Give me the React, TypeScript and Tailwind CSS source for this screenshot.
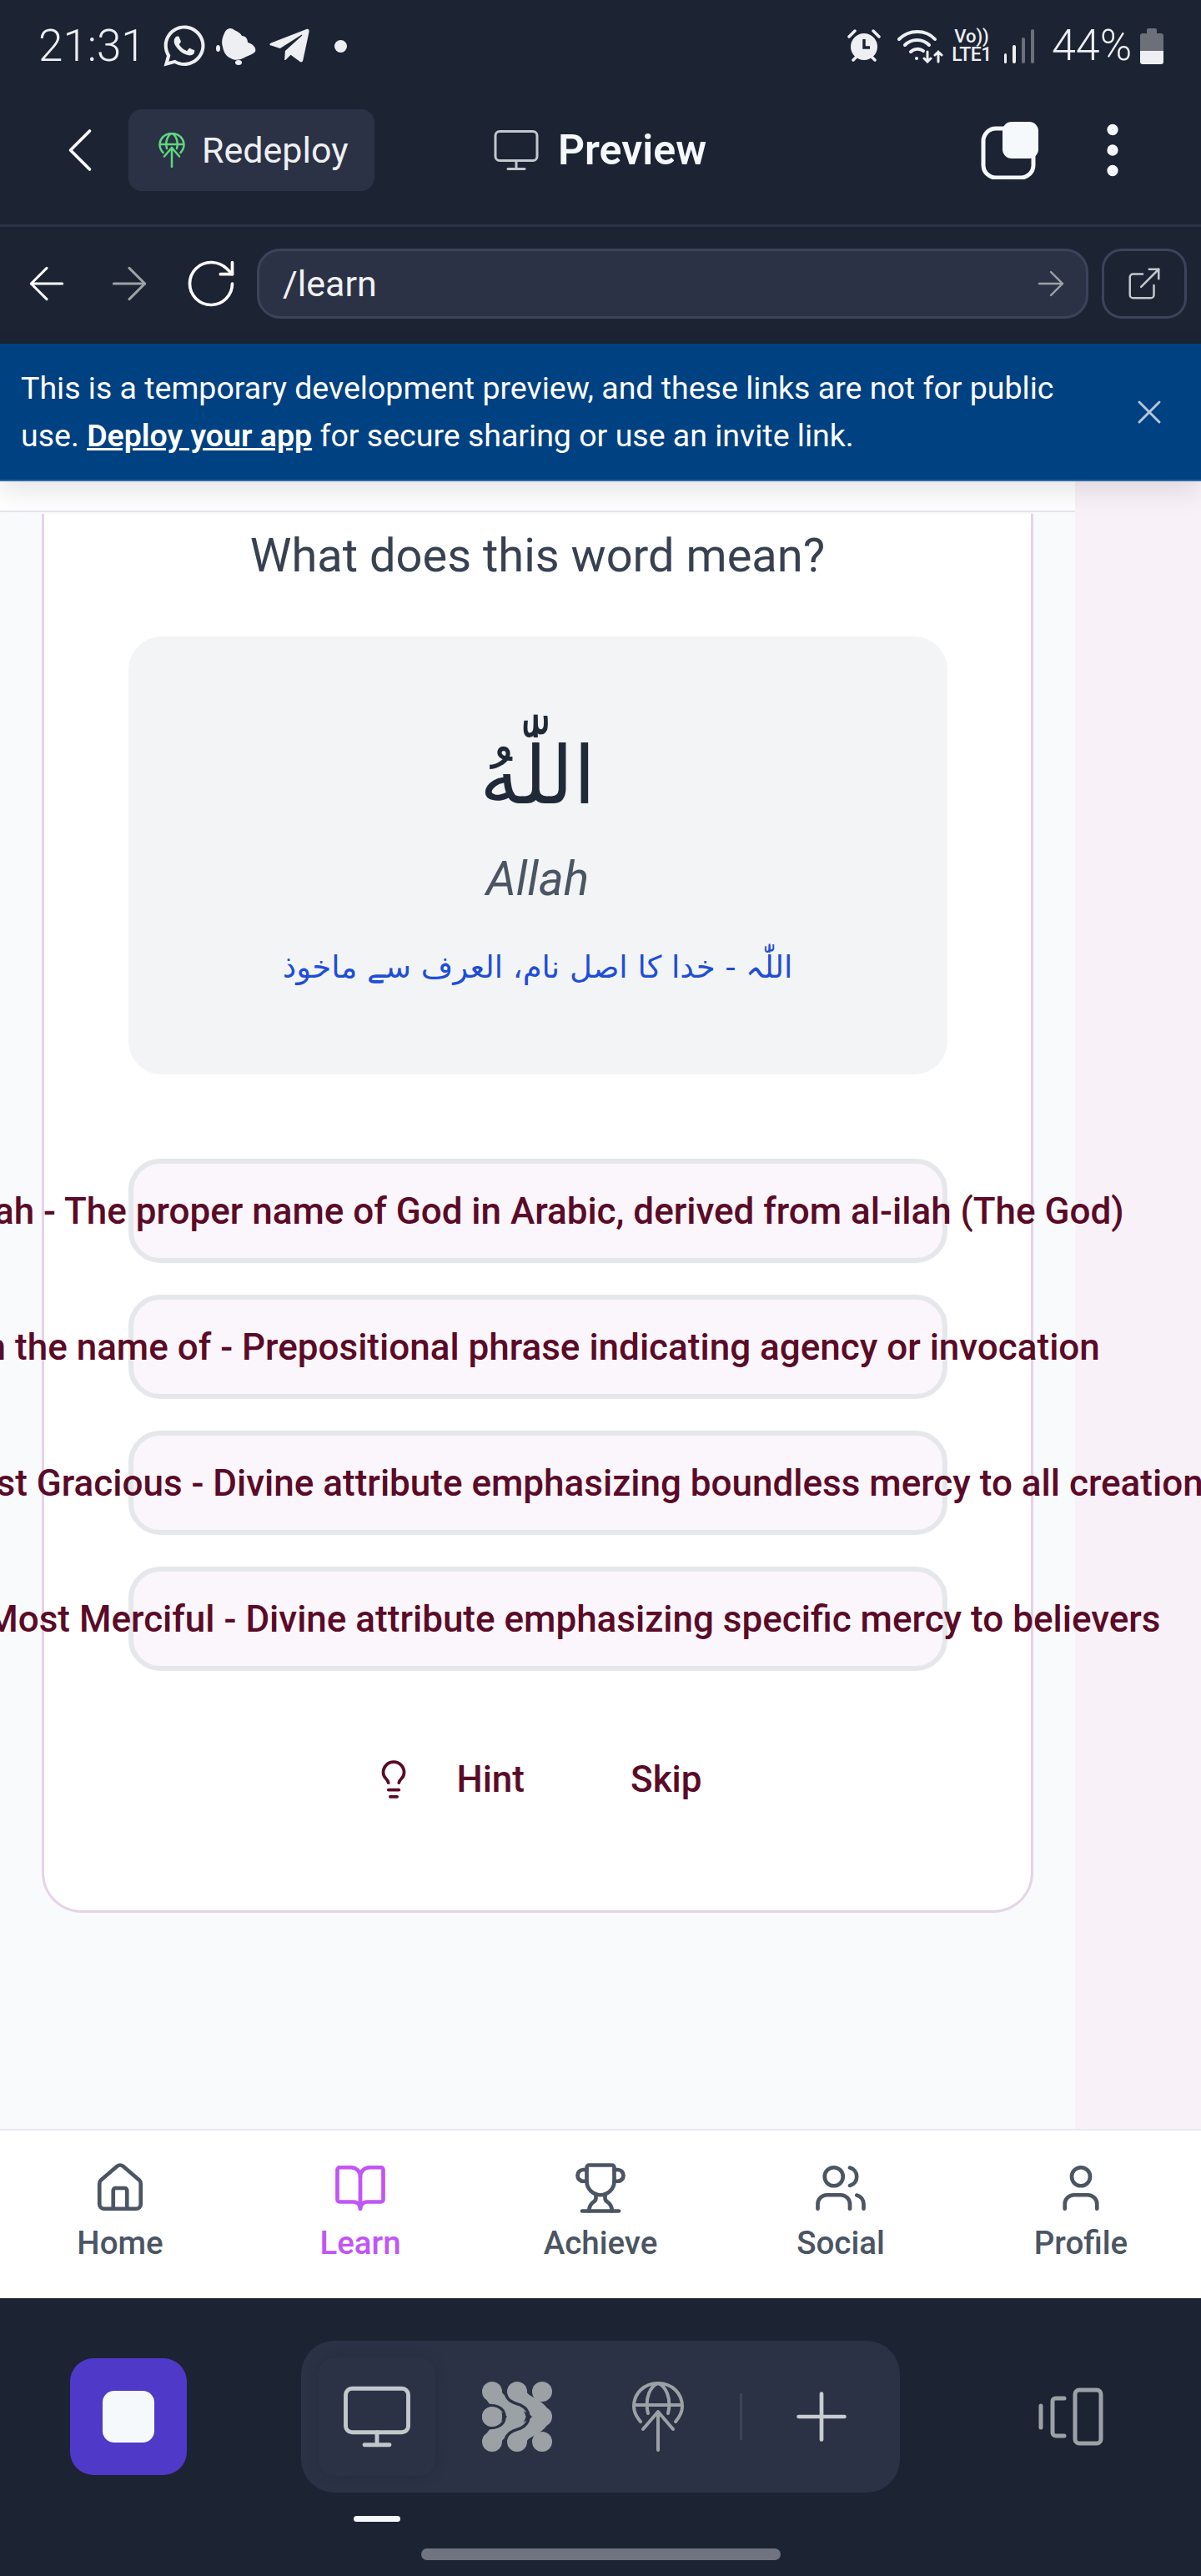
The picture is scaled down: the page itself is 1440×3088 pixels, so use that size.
import React from "react";
import { FaWhatsapp, FaTelegramPlane } from "react-icons/fa";
import { ChevronLeft, Monitor, MoreVertical, ArrowLeft, ArrowRight, RotateCw, ExternalLink, X, Lightbulb, House, BookOpen, Trophy, Users, User, Plus } from "lucide-react";

function DeployGlobe({ className, strokeWidth = 4 }: { className?: string; strokeWidth?: number }) {
  return (
    <svg viewBox="0 0 62 84" fill="none" stroke="currentColor" strokeWidth={strokeWidth} strokeLinecap="round" strokeLinejoin="round" className={className}>
      <path d="M10 48C5 42 2 36 2 30C2 14 14 2 31 2C48 2 60 14 60 30C60 36 57 42 52 48" />
      <path d="M19 38C17 30 17 22 20 14C23 7 27 3 31 2C35 3 39 7 42 14C45 22 45 30 43 38" />
      <path d="M4 28H58" />
      <path d="M31 82V36M13 57L31 36L49 57" />
    </svg>
  );
}

function AgentIcon({ className }: { className?: string }) {
  return (
    <svg viewBox="0 0 84 84" className={className}>
      <g fill="#9ca1a5">
        <circle cx="12" cy="12" r="12" /><circle cx="42" cy="12" r="12" /><circle cx="72" cy="12" r="12" />
        <circle cx="12" cy="42" r="12" /><circle cx="72" cy="42" r="12" />
        <circle cx="12" cy="72" r="12" /><circle cx="42" cy="72" r="12" /><circle cx="72" cy="72" r="12" />
      </g>
      <g fill="none" stroke="#9ca1a5" strokeWidth="20" strokeLinecap="round">
        <path d="M12 12C18 30 36 26 42 42C36 58 18 54 12 72" />
        <path d="M42 12C48 30 66 26 72 42C66 58 48 54 42 72" />
      </g>
      <g fill="none" stroke="#2b3245" strokeWidth="3.5" strokeLinecap="round">
        <path d="M28 14C30 24 40 26 46 28C52 31 56 36 56 42C56 48 52 53 46 56C40 58 30 60 28 70" />
        <path d="M1 30C14 26 27 30 27 42C27 54 14 58 1 54" />
      </g>
      <circle cx="12" cy="42" r="12" fill="#9ca1a5" />
    </svg>
  );
}

function StatusLeft() {
  return (
    <div className="flex items-center">
      <span className="w-[193px] pl-[46px] text-[53px] leading-none font-light text-[#eeeff2]">21:31</span>
      <FaWhatsapp className="h-[56px] w-[56px] text-[#eeeff2]" />
      <svg viewBox="0 0 50 46" className="ml-[10px] h-[46px] w-[50px] text-[#eeeff2]" fill="currentColor">
        <path d="M10 8C12 2 18 0 22 4C26 6 30 8 31 11C36 11 38 15 38 19C43 20 49 25 47 30C44 33 40 34 36 36C30 40 22 41 18 38C12 36 9 30 8 24C6 18 8 12 10 8Z" />
        <ellipse cx="2.5" cy="26" rx="2.5" ry="4" />
        <ellipse cx="27" cy="43" rx="4" ry="3" />
      </svg>
      <FaTelegramPlane className="ml-[11px] h-[54px] w-[54px] text-[#eeeff2]" />
      <span className="ml-[27px] h-[15px] w-[15px] rounded-full bg-[#eeeff2]" />
    </div>
  );
}

function StatusRight() {
  return (
    <div className="flex items-center text-[#eeeff2]">
      <svg viewBox="0 0 40 40" className="h-[40px] w-[40px]">
        <circle cx="20" cy="21" r="16" fill="currentColor" />
        <path d="M20 12V22H27" fill="none" stroke="#1c2333" strokeWidth="3.5" />
        <path d="M2 9L9 2M38 9L31 2M7 37L11 33M33 37L29 33" stroke="currentColor" strokeWidth="3.5" strokeLinecap="round" />
      </svg>
      <svg viewBox="0 0 56 42" className="ml-[20px] h-[42px] w-[56px]" fill="none" stroke="currentColor" strokeWidth="4" strokeLinecap="round">
        <path d="M2 13C14 1 34 1 45 13" />
        <path d="M9 20C17 12 30 12 38 20" />
        <path d="M16 28C20 24 27 24 31 27" />
        <circle cx="23" cy="36" r="2" fill="currentColor" stroke="none" />
        <path d="M36 28V40M32 36L36 40L40 36M49 40V28M45 32L49 28L53 32" strokeWidth="3" />
      </svg>
      <div className="ml-[6px] flex w-[54px] flex-col items-center text-center font-[Roboto] leading-none">
        <span className="text-[22px] leading-[22px] font-medium">Vo))</span>
        <span className="text-[23px] leading-[22px] font-medium tracking-[-0.5px]">LTE1</span>
      </div>
      <div className="ml-[12px] flex h-[41px] items-end gap-[7px]">
        <span className="h-[12px] w-[3px] rounded-full bg-[#eeeff2]" />
        <span className="h-[22px] w-[4px] rounded-full bg-[#eeeff2]" />
        <span className="h-[31px] w-[4px] rounded-full bg-[#6c7079]" />
        <span className="h-[41px] w-[4px] rounded-full bg-[#6c7079]" />
      </div>
      <span className="ml-[21px] w-[99px] text-[52px] leading-none font-light">44%</span>
      <div className="ml-[7px] flex h-[43px] w-[28px] flex-col items-center">
        <span className="h-[6px] w-[12px] rounded-t-[2px] bg-[#6c7079]" />
        <span className="h-[21px] w-full rounded-t-[3px] bg-[#6c7079]" />
        <span className="h-[16px] w-full rounded-b-[3px] bg-[#eeeff2]" />
      </div>
    </div>
  );
}

function Option({ text }: { text: string }) {
  return (
    <div className="flex h-[125px] w-[982px] items-center justify-center rounded-[38px] border-[6px] border-[#e5e7eb] bg-[#faf6fb] whitespace-nowrap">
      <span className="text-[44px] font-medium text-[#5b0a27]">{text}</span>
    </div>
  );
}

const navItems = [
  { label: "Home", Icon: House, active: false },
  { label: "Learn", Icon: BookOpen, active: true },
  { label: "Achieve", Icon: Trophy, active: false },
  { label: "Social", Icon: Users, active: false },
  { label: "Profile", Icon: User, active: false },
];

export default function App() {
  return (
    <div className="flex h-[3088px] w-[1440px] flex-col overflow-hidden bg-white font-[Roboto,sans-serif]">
      {/* system + app header */}
      <header className="h-[272px] shrink-0 border-b-[3px] border-[#2b3245] bg-[#1c2333]">
        <div className="flex h-[110px] items-center justify-between pr-[45px]">
          <StatusLeft />
          <StatusRight />
        </div>
        <div className="mt-[35px] flex h-[70px] items-center">
          <ChevronLeft className="ml-[50px] h-[92px] w-[92px] shrink-0 text-white" strokeWidth={0.95} />
          <button className="ml-[12px] -my-[14px] flex h-[98px] w-[295px] shrink-0 items-center rounded-[16px] bg-[#2b3245]">
            <DeployGlobe className="ml-[36px] h-[42px] w-[32px] text-[#5fd77f]" strokeWidth={5} />
            <span className="ml-[20px] text-[43px] font-normal text-[#eef0f3]">Redeploy</span>
          </button>
          <Monitor className="ml-[140px] h-[60px] w-[60px] text-[#c2c8cc]" strokeWidth={1.2} />
          <span className="ml-[20px] text-[50px] font-semibold text-[#f5f9fc]">Preview</span>
          <svg viewBox="0 0 70 70" className="ml-[329px] h-[70px] w-[70px]">
            <rect x="3" y="9" width="60" height="59" rx="15" fill="none" stroke="#f5f9fc" strokeWidth="5" />
            <rect x="26" y="1" width="43" height="44" rx="11" fill="#f5f9fc" />
          </svg>
          <MoreVertical className="ml-[46px] h-[84px] w-[84px] text-[#f5f9fc]" strokeWidth={1.8} />
        </div>
      </header>

      {/* url row */}
      <div className="flex h-[140px] shrink-0 items-center bg-[#1c2333] pb-[4px]">
        <ArrowLeft className="ml-[24px] h-[64px] w-[64px] shrink-0 text-white" strokeWidth={1.15} />
        <ArrowRight className="ml-[35px] h-[64px] w-[64px] shrink-0 text-[#9da2a6]" strokeWidth={1.15} />
        <RotateCw className="ml-[32px] h-[68px] w-[68px] shrink-0 text-white" strokeWidth={1.3} />
        <div className="ml-[21px] flex h-[84px] w-[997px] shrink-0 items-center justify-between rounded-[28px] border-[3px] border-[#3c445c] bg-[#2b3245] pr-[18px] pl-[28px]">
          <span className="text-[43px] font-normal text-[#f0f1f4]">/learn</span>
          <ArrowRight className="h-[48px] w-[48px] text-[#9da2a6]" strokeWidth={1.2} />
        </div>
        <div className="ml-[16px] flex h-[84px] w-[102px] shrink-0 items-center justify-center rounded-[24px] border-[3px] border-[#3c445c]">
          <ExternalLink className="h-[46px] w-[46px] text-[#c2c8cc]" strokeWidth={1.3} />
        </div>
      </div>

      {/* banner */}
      <div className="relative z-20 flex h-[165px] shrink-0 items-center justify-between border-b-[2px] border-[#2f68a5] bg-[#004182] pr-[38px] pl-[25px] shadow-[0_12px_30px_rgba(0,0,0,0.10)]">
        <p className="w-[1290px] text-[37.5px] leading-[57px] font-normal text-white">
          This is a temporary development preview, and these links are not for public use.{" "}
          <span className="font-semibold underline">Deploy your app</span> for secure sharing or use an invite link.
        </p>
        <X className="h-[48px] w-[48px] text-[#b5c6da]" strokeWidth={1.5} />
      </div>

      {/* main */}
      <main className="flex min-h-0 flex-1">
        <div className="relative w-[1289px] shrink-0 bg-[#f9fafb]">
          <div className="h-[37px] border-b-[2px] border-[#e7e3ec] bg-white" />
          <section className="mt-[2px] ml-[50px] flex h-[1677px] w-[1189px] flex-col items-center rounded-b-[48px] border-x-[3px] border-b-[3px] border-[#e5d3e8] bg-white">
            <h2 className="mt-[12px] text-[56px] leading-[76px] font-normal text-[#374151]">What does this word mean?</h2>
            <div className="mt-[59px] flex h-[525px] w-[982px] shrink-0 flex-col items-center rounded-[40px] bg-[#f3f4f6]">
              <div dir="rtl" className="mt-[102px] font-['DejaVu_Sans',sans-serif] text-[96px] leading-[130px] text-[#1f2937]">اللّٰهُ</div>
              <div className="mt-[19px] text-[57px] leading-[80px] font-normal text-[#4b5563] italic">Allah</div>
              <div dir="rtl" className="mt-[36px] font-['DejaVu_Sans',sans-serif] text-[37px] leading-[60px] text-[#1d4ed8]">اللّٰہ - خدا کا اصل نام، العرف سے ماخوذ</div>
            </div>
            <div className="mt-[101px] flex flex-col gap-[38px]">
              <Option text="Allah - The proper name of God in Arabic, derived from al-ilah (The God)" />
              <Option text="In the name of - Prepositional phrase indicating agency or invocation" />
              <Option text="The Most Gracious - Divine attribute emphasizing boundless mercy to all creation" />
              <Option text="The Most Merciful - Divine attribute emphasizing specific mercy to believers" />
            </div>
            <div className="mt-[97px] flex items-center text-[#5b0a27]">
              <Lightbulb className="h-[50px] w-[50px] text-[#5b0a27]" strokeWidth={1.8} />
              <span className="ml-[50px] text-[44px] font-medium">Hint</span>
              <span className="ml-[127px] text-[44px] font-medium">Skip</span>
            </div>
          </section>
        </div>
        <div className="flex-1 bg-[#f8f1f7]" />
      </main>

      {/* bottom nav */}
      <nav className="grid h-[203px] shrink-0 grid-cols-5 border-t-[2px] border-[#e9e9ee] bg-white">
        {navItems.map(({ label, Icon, active }) => (
          <div key={label} className={`flex flex-col items-center pt-[36px] ${active ? "text-[#c155f5]" : "text-[#4b5563]"}`}>
            <Icon className="h-[66px] w-[66px]" strokeWidth={1.7} />
            <span className="mt-[9px] text-[38.5px] leading-[48px] font-medium">{label}</span>
          </div>
        ))}
      </nav>

      {/* bottom bar */}
      <footer className="flex h-[333px] shrink-0 flex-col bg-[#1c2333]">
        <div className="flex h-[233px] shrink-0 items-center pt-[51px]">
          <div className="ml-[84px] flex h-[140px] w-[140px] shrink-0 items-center justify-center rounded-[28px] bg-[#4f39c8]">
            <span className="h-[62px] w-[62px] rounded-[14px] bg-[#f5f9fc]" />
          </div>
          <div className="ml-[137px] flex h-[182px] w-[718px] shrink-0 items-center rounded-[40px] bg-[#2b3245]">
            <div className="ml-[21px] flex h-[142px] w-[140px] shrink-0 items-center justify-center rounded-[20px] shadow-[0_0_14px_rgba(28,35,51,0.35)]">
              <Monitor className="h-[90px] w-[90px] text-[#c2c8cc]" strokeWidth={1.3} />
            </div>
            <AgentIcon className="ml-[56px] h-[84px] w-[84px] shrink-0" />
            <DeployGlobe className="ml-[96px] h-[84px] w-[62px] shrink-0 text-[#9ca1a5]" strokeWidth={4} />
            <span className="ml-[67px] h-[56px] w-[3px] shrink-0 bg-[#3c445c]" />
            <Plus className="ml-[48px] h-[94px] w-[94px] shrink-0 text-[#c9cdd1]" strokeWidth={1.2} />
          </div>
          <svg viewBox="0 0 78 70" className="ml-[166px] h-[70px] w-[78px] shrink-0" fill="none" stroke="#9ca1a5" strokeWidth="5" strokeLinecap="round" strokeLinejoin="round">
            <path d="M3 22V48" />
            <path d="M31 13H21C18 13 17 14 17 17V54C17 56 18 58 21 58H31" />
            <rect x="44" y="3" width="31" height="64" rx="5" />
          </svg>
        </div>
        <span className="mt-[28px] ml-[424px] h-[7px] w-[56px] rounded-full bg-[#f5f9fc]" />
        <span className="mt-[32px] ml-[505px] h-[14px] w-[431px] rounded-full bg-[#6f7480]" />
      </footer>
    </div>
  );
}
